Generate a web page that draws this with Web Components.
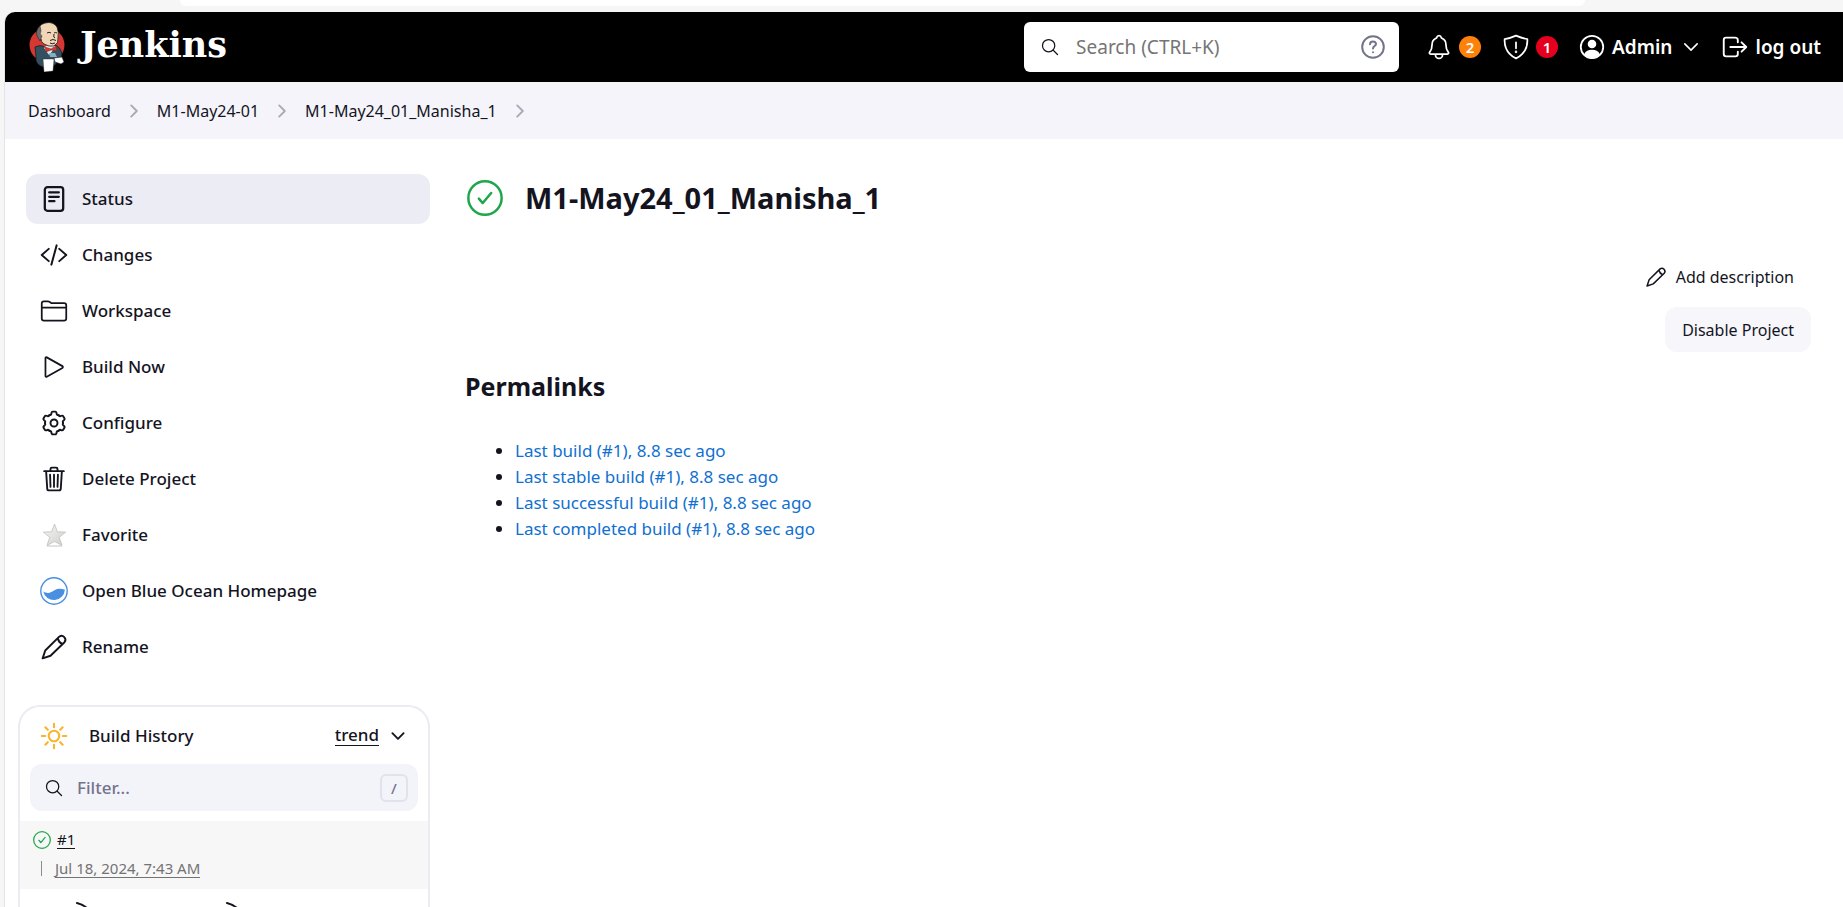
<!DOCTYPE html>
<html lang="en">
<head>
<meta charset="utf-8">
<title>M1-May24_01_Manisha_1 [Jenkins]</title>
<style>
  html, body { margin: 0; height: 100%; }
  body {
    overflow: hidden;
    background: #f6f6f6;
    color: #14141f;
    font: 500 17px/26px "Noto Sans", "Open Sans", sans-serif;
  }
</style>
</head>
<body>
<jenkins-app></jenkins-app>
<script>
const line = (w, body, box = 512) =>
  `<svg viewBox="0 0 ${box} ${box}" fill="none" stroke="currentColor" stroke-width="${w}" stroke-linecap="round" stroke-linejoin="round">${body}</svg>`;
const tooth = '<path d="M10.85 7.08C11.7 6.6 12.5 7 12.8 6C13.1 4 13.4 3 14.5 3H17.5C18.6 3 18.9 4 19.2 6C19.5 7 20.3 6.6 21.15 7.08"';
const gear = [0, 60, 120, 180, 240, 300].map(a => `${tooth} transform="rotate(${a} 16 16)"/>`).join('');
const rays = [0, 45, 90, 135, 180, 225, 270, 315].map(a => `<path d="M16 2v4" transform="rotate(${a} 16 16)"/>`).join('');

const ICONS = {
  next: line(48, '<path d="M184 112l144 144-144 144"/>'),
  down: line(48, '<path d="M112 184l144 144 144-144"/>'),
  downThin: line(36, '<path d="M112 184l144 144 144-144"/>'),
  search: line(32, '<circle cx="221" cy="221" r="157"/><path d="M338 338l110 110"/>'),
  bell: line(32, '<path d="M427.68 351.43C402 320 383.87 304 383.87 217.35 383.87 138 343.35 109.73 310 96c-4.43-1.82-8.6-6-9.95-10.55C294.2 65.54 277.8 48 256 48s-38.21 17.55-44 37.47c-1.35 4.6-5.52 8.71-9.95 10.53-33.39 13.75-73.87 41.92-73.87 121.35C128.13 304 110 320 84.32 351.43 73.68 364.45 83 384 101.61 384h308.88c18.51 0 27.77-19.61 17.19-32.57zM320 384v16a64 64 0 01-128 0v-16"/>'),
  shield: line(32, '<path d="M463.1 112.37C373.68 96.33 336.71 84.45 256 48c-80.71 36.45-117.68 48.33-207.1 64.37C32.7 369.13 240.58 457.79 256 464c15.42-6.21 223.3-94.87 207.1-351.63zM256 170v110"/><circle cx="256" cy="345" r="8"/>'),
  user: line(2.2, '<circle cx="16" cy="16" r="13.8"/><circle cx="16" cy="12.3" r="4.2" fill="currentColor"/><path fill="currentColor" d="M7.5 25C9.500 21 13 20.500 16 20.500S22.500 21 24.500 25Q21 29.500 16 29.500T7.500 25z"/>', 32),
  logout: line(32, '<path d="M304 336v40a40 40 0 01-40 40H104a40 40 0 01-40-40V136a40 40 0 0140-40h152c22.090 0 48 17.910 48 40v40M368 336l80-80-80-80M176 256h256"/>'),
  help: line(2, '<circle cx="12" cy="12" r="10.800"/><path d="M9 9.300C9 5.500 15 5.700 15 9C15 11 12 11.200 12 13.500"/><path d="M12 17.200v.1"/>', 24),
  status: line(2.6, '<rect x="5.500" y="2.500" width="21" height="27" rx="3"/><path d="M10.500 8.500h11M10.500 13.500h11M10.500 18.500h6"/>', 32),
  code: line(36, '<path d="M160 368L32 256l128-112M352 368l128-112-128-112M304 80l-96 352"/>'),
  folder: line(32, '<path d="M440 432H72a40 40 0 01-40-40V120a40 40 0 0140-40h75.890a40 40 0 0122.190 6.720l27.840 18.560a40 40 0 0022.190 6.720H440a40 40 0 0140 40v240a40 40 0 01-40 40zM32 192h448"/>'),
  play: line(32, '<path d="M100 91v330c0 14 12 18 24 12l286-160c12-7 12-26 0-33L124 80c-12-6-24-3-24 11z"/>'),
  gear: line(2.2, gear + '<circle cx="16" cy="16" r="4"/>', 32),
  trash: line(34, '<path d="M112 112l20 320c1 18 14 32 32 32h184c18 0 31-14 32-32l20-320M76 112h360M192 112V72a24 24 0 0124-24h80a24 24 0 0124 24v40M256 176v224M184 176l8 224M328 176l-8 224"/>'),
  pencil: line(2.2, '<path d="M3 29L6 20L22 4.200A4.400 4.400 0 0 1 28 10.500L12 26ZM20.500 6.500Q21.500 11 25.500 12.500"/>', 32),
  star: `<svg viewBox="0 0 28 28"><defs><linearGradient id="g" x2="1" y2="1"><stop stop-color="#f6f6f4"/><stop offset="1" stop-color="#cfcfcc"/></linearGradient></defs><path fill="url(#g)" stroke="#b9b9b6" stroke-width=".7" d="M14.500 3l2.900 7.800 8.300.3-6.500 5.200 2.900 8.300-7.600-4.200-7.600 4.200 2.900-8.300-6.500-5.200 8.300-.3z"/><path d="M7 25h15" stroke="#c4c4c2" stroke-width="1"/></svg>`,
  ocean: `<svg viewBox="0 0 28 28"><circle cx="14" cy="14" r="13.200" fill="#fff" stroke="#4a90e2" stroke-width="1.400"/><path fill="#4a90e2" d="M3.200 14.500C8 17.200 11 15.500 14.500 13.300C18.500 11 21.500 11.500 24.900 12.800A11 11 0 0 1 3.200 14.500z"/></svg>`,
  sun: line(2.4, rays + '<circle cx="16" cy="16" r="6"/>', 32),
  check: line(2.2, '<circle cx="16" cy="16" r="14.800"/><path d="M10.500 16.500l3.500 4 7.500-9"/>', 32),
  arc: line(2, '<path d="M1 1C5 2 9 4 12 7C16 11 16 17 12 21C8 25 4 26 1 27"/>', 28),
  butler: `<svg viewBox="0 0 36 50"><ellipse cx="18" cy="23" rx="17.500" ry="17" fill="#d33833"/>
    <path d="M7 34L6 25Q10 23 14 24L19 28L27 23Q32 26 33 32L32 36L28 37L27 42Q22 46 14 45Q8 43 7 38z" fill="#335061" stroke="#1a1a22" stroke-width=".8"/>
    <path d="M15 26l5 7 7-8-2-2-8 1z" fill="#dfe6ea"/>
    <path d="M8 10Q9 3 16 1Q24-1 28 5Q30 10 29 16Q30 21 25 24Q20 25 15 22Q12 20 12 17Q8 16 8 10z" fill="#f0d6b7" stroke="#1a1a22" stroke-width=".8"/>
    <path d="M11 4Q6 9 8 14L11 19L13 14Q10 12 12 9z" fill="#6d6b6d" stroke="#1a1a22" stroke-width=".5"/>
    <path d="M18 11q2-1.500 4 0M25 11q2-1 3 0M25 12q-1 4 1 4M21 18.500q3-2 6 0M21 21q2 1.500 5 0" fill="none" stroke="#222" stroke-width="1"/>
    <path d="M16 25l6 2 5-3 1 5-6-1-5 2z" fill="#d33833" stroke="#8c1c1a" stroke-width=".5"/>
    <path d="M20 31h6l2 4h-7z" fill="#81b0c4"/>
    <path d="M14 37h11l-1 12-9 1z" fill="#fff" stroke="#222" stroke-width=".4"/>
    <path d="M25 36l8-1 2 5-3 2-6-2z" fill="#fff" stroke="#222" stroke-width=".6"/></svg>`
};

const define = (name, css, html) => customElements.define(name, class extends HTMLElement {
  constructor() {
    super();
    const t = document.createElement('template');
    t.innerHTML = `<style>*{box-sizing:border-box}a{color:inherit;text-decoration:none}button,input{font:inherit;color:inherit;border:0;background:none;padding:0;margin:0}${css}</style>` +
      (typeof html === 'function' ? html(this) : html);
    this.attachShadow({ mode: 'open' }).append(t.content.cloneNode(true));
  }
});

define('ui-icon', `
  :host { display: block; flex: none; width: var(--size, 28px); height: var(--size, 28px); }
  svg { display: block; width: 100%; height: 100%; }
`, el => ICONS[el.getAttribute('name')]);

define('count-badge', `
  :host { display: grid; place-items: center; width: 22px; height: 22px; border-radius: 50%;
    background: var(--badge); color: #fff; font-size: 15px; line-height: 22px; font-weight: 600; }
`, '<slot></slot>');

define('app-header', `
  :host { display: flex; align-items: center; height: 70px; padding: 0 22px 0 24px;
    background: #000; color: #fff; border-top-left-radius: 10px; }
  .brand { display: flex; align-items: center; gap: 15px; margin-right: auto;
    font: 700 35px/50px "DejaVu Serif", serif; }
  .brand span { padding-bottom: 4px; }
  .brand ui-icon { width: 36px; height: 50px; }
  .search { display: flex; align-items: center; width: 375px; height: 50px; padding: 0 14px 0 16px;
    border-radius: 6px; background: #fff; color: #14141f; margin-right: 26px; }
  input { flex: 1; min-width: 0; margin-left: 16px; font-size: 19px; font-weight: 400; outline: 0; }
  input::placeholder { color: #757575; opacity: 1; }
  .search button { color: #73738c; }
  .alert, .user, .out { display: flex; align-items: center; font-weight: 600; font-size: 19px; }
  .alert { gap: 6px; margin-right: 21px; }
  .user { gap: 7px; margin-right: 18px; }
  .out { gap: 6px; }
`, `
  <a class="brand" href="#"><ui-icon name="butler"></ui-icon><span>Jenkins</span></a>
  <div class="search">
    <ui-icon name="search" style="--size:20px"></ui-icon>
    <input type="text" placeholder="Search (CTRL+K)" aria-label="Search">
    <button aria-label="Help"><ui-icon name="help" style="--size:24px"></ui-icon></button>
  </div>
  <button class="alert" aria-label="Notifications"><ui-icon name="bell"></ui-icon><count-badge style="--badge:#fe820a">2</count-badge></button>
  <button class="alert" aria-label="Security warnings"><ui-icon name="shield"></ui-icon><count-badge style="--badge:#e6001f">1</count-badge></button>
  <a class="user" href="#"><ui-icon name="user" style="--size:26px"></ui-icon>Admin<ui-icon name="downThin" style="--size:22px"></ui-icon></a>
  <a class="out" href="#"><ui-icon name="logout" style="--size:30px"></ui-icon>log out</a>
`);

define('bread-crumbs', `
  :host { display: flex; align-items: center; height: 57px; padding-left: 23px; background: #f4f4fa; font-size: 16px; font-weight: 400; }
  nav { display: flex; align-items: center; gap: 13px; }
  ui-icon { --size: 20px; color: #a9a9b8; }
`, `<nav aria-label="Breadcrumb">
  <a href="#">Dashboard</a><ui-icon name="next"></ui-icon>
  <a href="#">M1-May24-01</a><ui-icon name="next"></ui-icon>
  <a href="#">M1-May24_01_Manisha_1</a><ui-icon name="next"></ui-icon></nav>`);

define('task-link', `
  :host { display: block; }
  a { display: flex; align-items: center; gap: 14px; height: 50px; padding-left: 14px; border-radius: 12px; }
  :host([current]) a { background: #ececf5; }
`, el => `<a href="#"><ui-icon name="${el.getAttribute('icon')}"></ui-icon><slot></slot></a>`);

define('build-history', `
  :host { display: block; border: 2px solid #ebebf2; border-radius: 22px; background: #fff; height: 320px; }
  header { display: flex; align-items: center; height: 57px; padding: 0 20px; }
  header ui-icon { --size: 28px; }
  header ui-icon[name=sun] { color: #fcb42c; }
  h2 { margin: 0 auto 0 21px; font: inherit; }
  header a { border-bottom: 1px solid; line-height: 20px; margin-right: 9px; }
  header button ui-icon { --size: 20px; }
  .filter { display: flex; align-items: center; gap: 13px; height: 47px; margin: 0 10px 10px;
    padding: 0 10px 0 14px; border-radius: 12px; background: #f3f3fa; }
  .filter ui-icon { --size: 20px; }
  input { flex: 1; min-width: 0; outline: 0; font-size: 17px; }
  input::placeholder { color: #73738c; opacity: 1; }
  kbd { width: 28px; height: 28px; border: 2px solid #e2e2ec; border-radius: 6px; font: inherit;
    font-size: 15px; line-height: 24px; text-align: center; color: #73738c; }
  .build { height: 68px; padding: 4px 13px; background: #f7f7f7; font-size: 15px; font-weight: 400; }
  .row { display: flex; align-items: center; height: 29px; }
  .row a { border-bottom: 1px solid; line-height: 18px; }
  .row ui-icon { --size: 18px; color: #1ea64b; margin-right: 6px; }
  .date { color: #737373; padding-left: 8px; }
  .date::before { content: ""; width: 1px; height: 15px; background: #8c8c8c; margin-right: 13px; }
  .pager { display: flex; gap: 122px; padding: 13px 56px; }
`, `
  <header><ui-icon name="sun"></ui-icon><h2>Build History</h2><a href="#">trend</a>
    <button aria-label="Collapse"><ui-icon name="down"></ui-icon></button></header>
  <div class="filter"><ui-icon name="search"></ui-icon><input type="text" placeholder="Filter..." aria-label="Filter builds"><kbd>/</kbd></div>
  <div class="build">
    <div class="row"><ui-icon name="check"></ui-icon><a href="#">#1</a></div>
    <div class="row date"><a href="#">Jul 18, 2024, 7:43 AM</a></div>
  </div>
  <div class="pager"><ui-icon name="arc"></ui-icon><ui-icon name="arc"></ui-icon></div>
`);

define('side-panel', `
  :host { display: block; width: 412px; flex: none; }
  nav { display: grid; gap: 6px; padding: 0 0 33px 8px; }
`, `
  <nav aria-label="Project tasks">
    <task-link icon="status" current>Status</task-link>
    <task-link icon="code">Changes</task-link>
    <task-link icon="folder">Workspace</task-link>
    <task-link icon="play">Build Now</task-link>
    <task-link icon="gear">Configure</task-link>
    <task-link icon="trash">Delete Project</task-link>
    <task-link icon="star">Favorite</task-link>
    <task-link icon="ocean">Open Blue Ocean Homepage</task-link>
    <task-link icon="pencil">Rename</task-link>
  </nav>
  <build-history></build-history>
`);

define('project-main', `
  :host { display: block; flex: 1; min-width: 0; }
  .title { display: flex; align-items: center; gap: 22px; height: 48px; padding-left: 2px; }
  .title ui-icon { --size: 36px; color: #1ea64b; }
  h1 { margin: 0; font-size: 29px; line-height: 40px; font-weight: 700; }
  .actions { display: flex; flex-direction: column; align-items: flex-end; gap: 8px; margin-top: 33px; font-size: 16px; font-weight: 400; }
  .actions a { display: flex; align-items: center; gap: 9px; height: 44px; padding-right: 17px; }
  .actions ui-icon { --size: 22px; }
  .actions button { height: 45px; padding: 0 17px; border-radius: 12px; background: #f6f6fb; }
  h2 { margin: 16px 0 34px; font-size: 25px; line-height: 36px; font-weight: 700; }
  ul { margin: 0; padding-left: 50px; }
  li a { color: #1070d0; font-weight: 400; }
`, `
  <div class="title"><ui-icon name="check"></ui-icon><h1>M1-May24_01_Manisha_1</h1></div>
  <div class="actions"><a href="#"><ui-icon name="pencil"></ui-icon>Add description</a><button>Disable Project</button></div>
  <h2>Permalinks</h2>
  <ul>
    <li><a href="#">Last build (#1), 8.8 sec ago</a></li>
    <li><a href="#">Last stable build (#1), 8.8 sec ago</a></li>
    <li><a href="#">Last successful build (#1), 8.8 sec ago</a></li>
    <li><a href="#">Last completed build (#1), 8.8 sec ago</a></li>
  </ul>
`);

define('jenkins-app', `
  :host { display: flex; flex-direction: column; height: 100vh; overflow: hidden; }
  .chrome { flex: none; height: 12px; padding: 0 258px 0 180px; }
  .tab { height: 6px; background: #fff; border-radius: 0 0 16px 16px; }
  .page { flex: 1; margin-left: 4px; border-left: 1px solid #e4e4e4; border-top-left-radius: 10px; background: #fff; }
  .body { display: flex; gap: 35px; padding: 35px 32px 0 13px; }
`, `
  <div class="chrome"><div class="tab"></div></div>
  <div class="page">
    <app-header></app-header>
    <bread-crumbs></bread-crumbs>
    <div class="body"><side-panel></side-panel><project-main></project-main></div>
  </div>
`);
</script>
</body>
</html>
